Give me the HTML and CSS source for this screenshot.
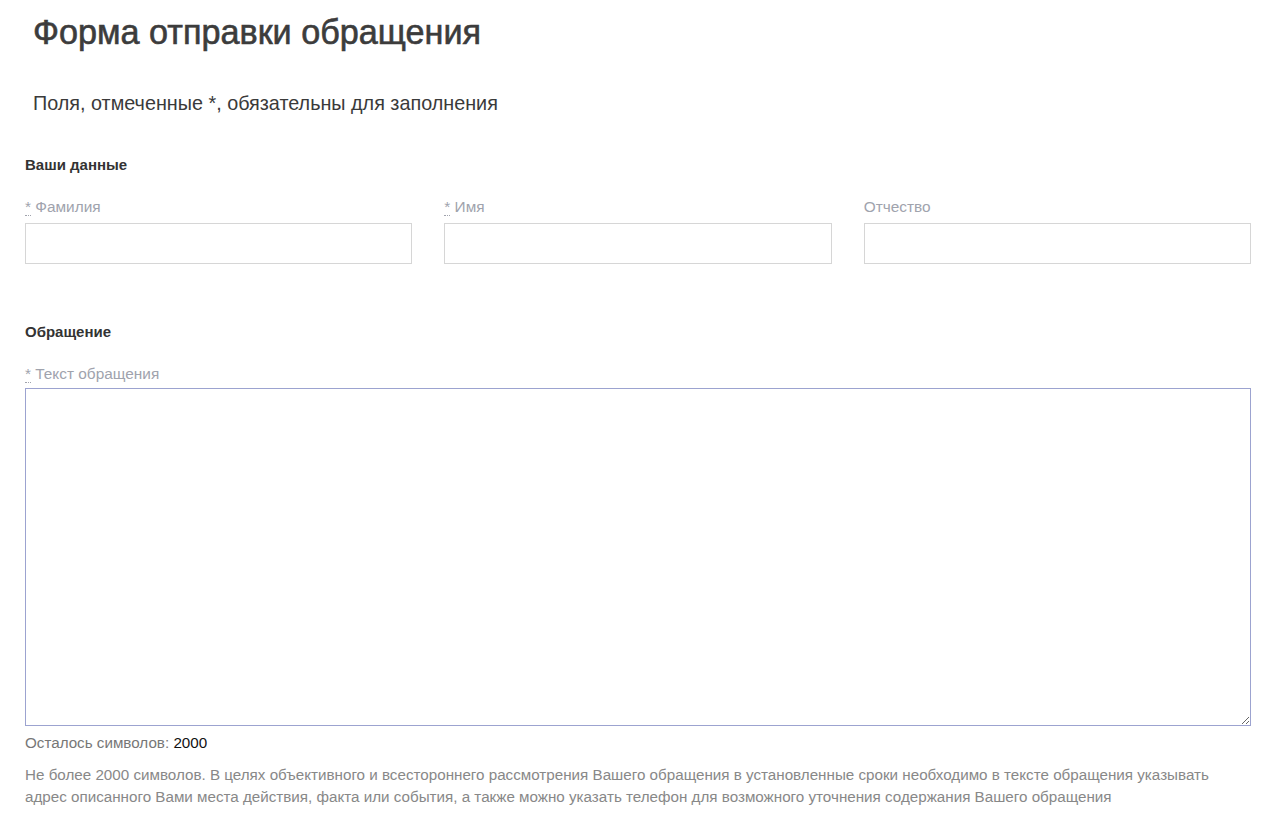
FILE: index.html
```html
<!DOCTYPE html>
<html lang="ru">
<head>
<meta charset="utf-8">
<title>Форма отправки обращения</title>
<link rel="stylesheet" href="styles.css">
</head>
<body>
<div class="page">
  <h1 class="title">Форма отправки обращения</h1>
  <p class="note">Поля, отмеченные *, обязательны для заполнения</p>

  <section class="group">
    <h2 class="group-title">Ваши данные</h2>
    <div class="row">
      <div class="field">
        <label class="label"><abbr class="req" title="обязательно">*</abbr> Фамилия</label>
        <input class="input" type="text">
      </div>
      <div class="field">
        <label class="label"><abbr class="req" title="обязательно">*</abbr> Имя</label>
        <input class="input" type="text">
      </div>
      <div class="field">
        <label class="label">Отчество</label>
        <input class="input" type="text">
      </div>
    </div>
  </section>

  <section class="group group-message">
    <h2 class="group-title">Обращение</h2>
    <label class="label"><abbr class="req" title="обязательно">*</abbr> Текст обращения</label>
    <textarea class="textarea"></textarea>
    <div class="counter">Осталось символов: <span class="counter-num">2000</span></div>
    <p class="hint">Не более 2000 символов. В целях объективного и всестороннего рассмотрения Вашего обращения в установленные сроки необходимо в тексте обращения указывать<br>адрес описанного Вами места действия, факта или события, а также можно указать телефон для возможного уточнения содержания Вашего обращения</p>
  </section>
</div>
</body>
</html>
```

FILE: styles.css
```css
* { box-sizing: border-box; }
html, body { margin: 0; padding: 0; background: #fff; }
body {
  font-family: "Liberation Sans", Arial, sans-serif;
  color: #333;
}
.page {
  padding: 0 29px 0 25px;
}
.title {
  margin: 0;
  padding: 12px 0 0 8px;
  font-size: 34.2px;
  line-height: 40px;
  font-weight: normal;
  color: #3c3c3c;
  -webkit-text-stroke: 0.6px #3c3c3c;
}
.note {
  margin: 0;
  padding: 39px 0 0 8px;
  font-size: 19.8px;
  line-height: 24px;
  color: #3a3a3a;
}
.group { padding-top: 40px; }
.group-message { padding-top: 58px; }
.group-title {
  margin: 0;
  font-size: 15px;
  line-height: 20px;
  font-weight: bold;
  color: #333;
}
.row {
  display: flex;
  gap: 32px;
  margin-top: 22px;
}
.field { flex: 1; display: flex; flex-direction: column; }
.label {
  display: block;
  font-size: 15.4px;
  line-height: 20px;
  color: #a0a3ad;
  height: 20px;
}
.group-message .label { margin-top: 22px; }
.req {
  text-decoration: none;
  border-bottom: 1px dotted #a0a3ad;
  cursor: help;
}
.input {
  margin-top: 6px;
  height: 41px;
  border: 1px solid #d6d6d6;
  background: #fff;
  font: inherit;
  padding: 0 10px;
  border-radius: 0;
  outline: none;
}
.textarea {
  display: block;
  width: 100%;
  height: 338px;
  margin-top: 4px;
  border: 1px solid #9ca3d0;
  border-radius: 0;
  resize: vertical;
  font: inherit;
  outline: none;
}
.counter {
  margin-top: 8px;
  font-size: 15.2px;
  line-height: 18px;
  color: #777;
}
.counter-num { color: #111; }
.hint {
  margin: 12px 0 0;
  font-size: 15.2px;
  line-height: 22px;
  color: #888;
}
```
